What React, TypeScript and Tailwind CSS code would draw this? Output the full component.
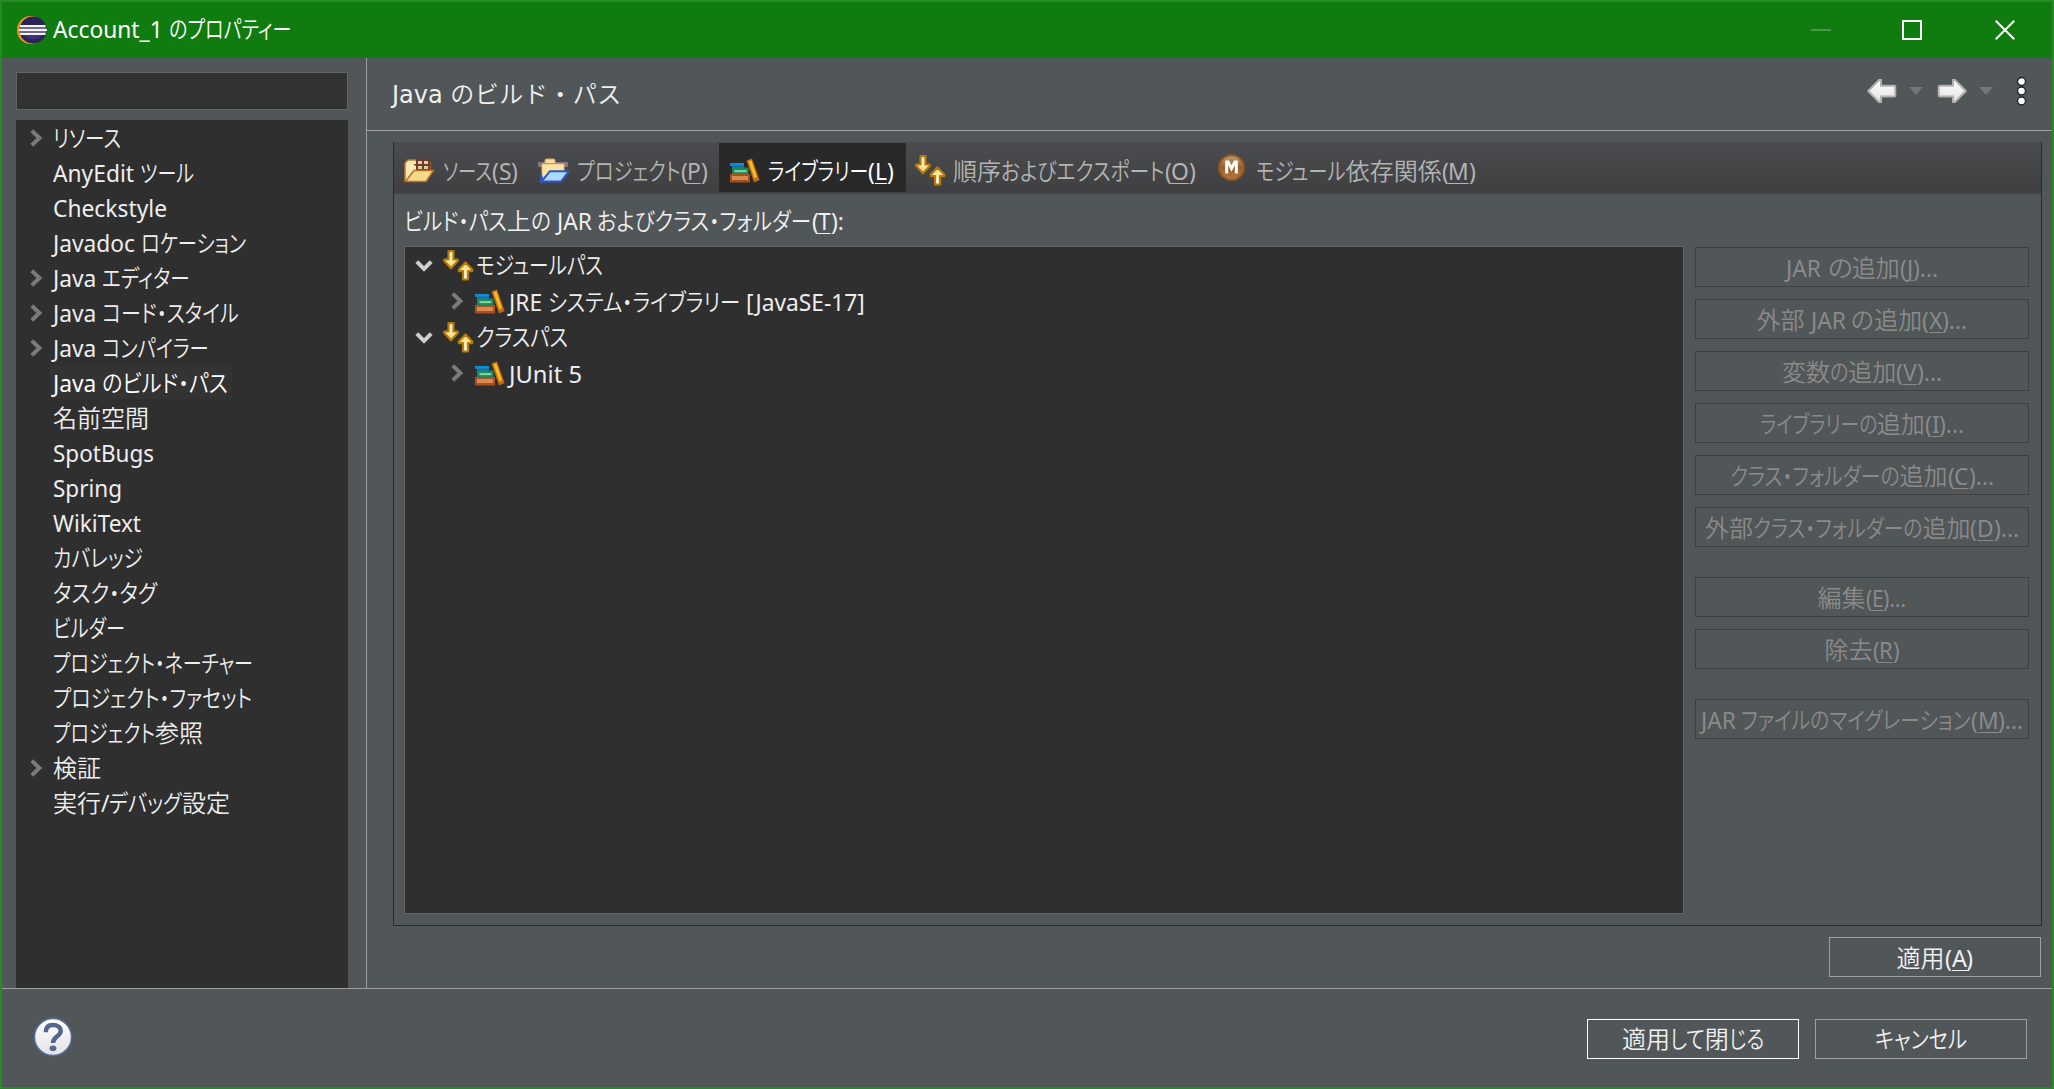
import { useLayoutEffect, useRef, type ReactNode } from 'react';

type Run = { kind: 'latin' | 'kana' | 'kanji'; text: string; underline: boolean };

function kindOf(ch: string): Run['kind'] {
  if (/[\u3040-\u30ff]/.test(ch)) return 'kana';
  if (/[\u3400-\u9fff]/.test(ch)) return 'kanji';
  return 'latin';
}

// Splits a label into script runs; a "&" marks the next character as the mnemonic.
function splitRuns(label: string): Run[] {
  const runs: Run[] = [];
  let underline = false;
  for (const ch of label) {
    if (ch === '&') {
      underline = true;
      continue;
    }
    const kind = kindOf(ch);
    const last = runs[runs.length - 1];
    if (last && last.kind === kind && !last.underline && !underline) last.text += ch;
    else runs.push({ kind, text: ch, underline });
    underline = false;
  }
  return runs;
}

const LATIN_SCALE = 0.99;

// UI label with condensed kana, fitted to a width in pixels.
function Label({ text, w, className = '' }: { text: string; w: number; className?: string }) {
  const ref = useRef<HTMLSpanElement>(null);
  useLayoutEffect(() => {
    const el = ref.current;
    if (!el) return;
    const spans = Array.from(el.children) as HTMLElement[];
    spans.forEach((s) => {
      s.style.width = '';
      s.style.transform = '';
    });
    const sizes = spans.map((s) => s.getBoundingClientRect().width);
    const sum = (k: string) => spans.reduce((a, s, i) => (s.dataset.kind === k ? a + sizes[i] : a), 0);
    const kana = sum('kana');
    const latin = sum('latin');
    const kanji = sum('kanji');
    const latinScale = kana > 0 || latin === 0 ? LATIN_SCALE : (w - kanji) / latin;
    const kanaScale = kana > 0 ? (w - kanji - latin * latinScale) / kana : 1;
    spans.forEach((s, i) => {
      const k = s.dataset.kind === 'kana' ? kanaScale : s.dataset.kind === 'latin' ? latinScale : 1;
      s.style.width = `${sizes[i] * k}px`;
      s.style.transform = `scaleX(${k})`;
    });
  }, [text, w]);
  return (
    <span
      ref={ref}
      className={`inline-block whitespace-pre pt-[3px] font-['Noto_Sans','Noto_Sans_CJK_JP',sans-serif] leading-[34px] ${className}`}
    >
      {splitRuns(text).map((r, i) => (
        <span
          key={i}
          data-kind={r.kind}
          className={`inline-block origin-left whitespace-pre ${
            r.kind === 'latin'
              ? 'text-[23px]'
              : r.kind === 'kana'
                ? "text-[24px] font-[350] [font-feature-settings:'palt']"
                : 'text-[24px] font-[350]'
          } ${r.underline ? 'underline decoration-1 underline-offset-[3px]' : ''}`}
        >
          {r.text}
        </span>
      ))}
    </span>
  );
}

function ChevronRight({ className = '' }: { className?: string }) {
  return (
    <svg width="13" height="18" viewBox="0 0 13 18" className={`shrink-0 ${className}`} fill="none">
      <path d="M1.8 1.8 L9.4 9 L1.8 16.2" stroke="#7b7b7b" strokeWidth="4" />
    </svg>
  );
}

function ChevronDown() {
  return (
    <svg width="18" height="12" viewBox="0 0 18 12" className="mt-[2px] shrink-0" fill="none">
      <path d="M1.8 1.6 L9 8.8 L16.2 1.6" stroke="#cfcfcf" strokeWidth="4" />
    </svg>
  );
}

function EclipseIcon() {
  return (
    <svg width="32" height="30" viewBox="0 0 32 30" className="shrink-0">
      <circle cx="16" cy="15" r="14" fill="#f7941e" />
      <circle cx="18" cy="15" r="13.6" fill="#2c2255" />
      <path d="M8 19h20a11 9 0 0 1-20 0z" fill="#40307c" />
      <path d="M4 13h27M4 17h27" stroke="#6f6a92" strokeWidth="2" />
      <path d="M5 11h25.500M4 15h28M5 19h25.500" stroke="#f2f4f4" strokeWidth="1.900" />
    </svg>
  );
}

function BooksIcon() {
  return (
    <svg width="30" height="25" viewBox="0 0 30 25" className="shrink-0">
      <path d="M0 5h14v5H2V8H0z" fill="#1d6cae" />
      <rect x="0" y="5" width="14" height="2.500" fill="#0b8fd8" />
      <rect x="2" y="9.500" width="16.500" height="7" fill="#188a5c" />
      <rect x="4.500" y="12" width="12" height="2.200" fill="#7fd09b" />
      <rect x="0" y="16" width="20" height="8.500" fill="#a5501e" />
      <rect x="2" y="18" width="16" height="4" fill="#d98a50" />
      <path d="M16.500 2.600 L22 .4 L29.600 22 L24 24.600z" fill="#c4691b" />
      <path d="M18.400 3.200 L21.400 2.200 L27 19 L24.400 20.400z" fill="#f5bd1f" />
    </svg>
  );
}

function ArrowsIcon() {
  const down = 'M5.500 1.200h5v8.300h4.200v1.600L8 18.200 1.300 11.100V9.500h4.200z';
  return (
    <svg width="31" height="31" viewBox="0 0 31 31" className="shrink-0">
      <defs>
        <linearGradient id="gold" x1="0" y1="0" x2="0" y2="1">
          <stop offset="0" stopColor="#fffbe6" />
          <stop offset="1" stopColor="#ffd870" />
        </linearGradient>
      </defs>
      <g stroke="#b57a0c" strokeWidth="2.200" strokeLinejoin="round" fill="url(#gold)">
        <path d={down} />
        <path d={down} transform="translate(30.500 30.700) rotate(180)" />
      </g>
    </svg>
  );
}

function SourceFolderIcon() {
  return (
    <svg width="31" height="25" viewBox="0 0 31 25" className="shrink-0">
      <path d="M1 23V5l3-3h8l2 3h12v8" fill="#fbe9b2" stroke="#c07a25" strokeWidth="1.500" />
      <rect x="12" y="1" width="14" height="11" fill="#6e3b2c" />
      <path d="M14 3h4v3h-4zM20 3h4v3h-4zM14 8h4v3h-4zM20 8h4v3h-4z" fill="#e3cf9e" />
      <path d="M10 6.800h18M16 1v-1M22 1v-1" stroke="#6e3b2c" strokeWidth="1.500" />
      <path d="M1.500 23.500 L10 12.500 H29.500 L22 23.500z" fill="#f8d98a" stroke="#b4722a" strokeWidth="1.500" />
    </svg>
  );
}

function ProjectFolderIcon() {
  return (
    <svg width="32" height="25" viewBox="0 0 32 25" className="shrink-0">
      <rect x="0" y="4" width="30" height="5" fill="#8a7480" />
      <path d="M7 5V2.500Q7 1 8.500 1h7Q17 1 17 2.500V5" fill="#f6dca4" stroke="#d9a95c" />
      <path d="M4 22V6h22v8" fill="#fbe3a6" stroke="#e3bb6f" />
      <path d="M3 15v8.500h4" fill="#4a6bd0" stroke="#3455bd" strokeWidth="2" />
      <path d="M3.500 23.500 L12 13.200 H31 L23 23.500z" fill="#a9dbff" stroke="#3455bd" strokeWidth="2" />
    </svg>
  );
}

function ModuleIcon() {
  return (
    <svg width="27" height="27" viewBox="0 0 27 27" className="shrink-0">
      <defs>
        <linearGradient id="bronze" x1="0" y1="0" x2="0" y2="1">
          <stop offset="0" stopColor="#c59a72" />
          <stop offset=".5" stopColor="#9a5f28" />
          <stop offset="1" stopColor="#b07a45" />
        </linearGradient>
      </defs>
      <circle cx="13.500" cy="13.500" r="12.300" fill="url(#bronze)" stroke="#94591f" strokeWidth="2" />
      <path d="M8.700 19.500V8h1.500l3.300 6.500L16.800 8h1.500v11.500" fill="none" stroke="#fff" strokeWidth="3" />
    </svg>
  );
}

function NavArrow({ flip = false }: { flip?: boolean }) {
  return (
    <svg width="30" height="24" viewBox="0 0 30 24" className={`shrink-0 ${flip ? '-scale-x-100' : ''}`}>
      <defs>
        <linearGradient id="silver" x1="0" y1="0" x2="0" y2="1">
          <stop offset="0" stopColor="#fff" />
          <stop offset="1" stopColor="#e2e2e2" />
        </linearGradient>
      </defs>
      <path
        d="M1.200 12 L12 1h2v5.800h13Q28.300 6.800 28.300 8v8.300q0 1.200-1.300 1.200H14V23h-2z"
        fill="url(#silver)"
        stroke="#b2b0ae"
        strokeWidth="2"
      />
    </svg>
  );
}

function DropTriangle() {
  return (
    <svg width="14" height="8" viewBox="0 0 14 8" className="shrink-0">
      <path d="M0 0h14L7 8z" fill="#747678" />
    </svg>
  );
}

const categories: { text: string; w: number; expandable?: boolean; selected?: boolean }[] = [
  { text: 'リソース', w: 68, expandable: true },
  { text: 'AnyEdit ツール', w: 141 },
  { text: 'Checkstyle', w: 114 },
  { text: 'Javadoc ロケーション', w: 193 },
  { text: 'Java エディター', w: 137, expandable: true },
  { text: 'Java コード・スタイル', w: 186, expandable: true },
  { text: 'Java コンパイラー', w: 156, expandable: true },
  { text: 'Java のビルド・パス', w: 175, selected: true },
  { text: '名前空間', w: 96 },
  { text: 'SpotBugs', w: 101 },
  { text: 'Spring', w: 69 },
  { text: 'WikiText', w: 88 },
  { text: 'カバレッジ', w: 90 },
  { text: 'タスク・タグ', w: 104 },
  { text: 'ビルダー', w: 72 },
  { text: 'プロジェクト・ネーチャー', w: 200 },
  { text: 'プロジェクト・ファセット', w: 199 },
  { text: 'プロジェクト参照', w: 150 },
  { text: '検証', w: 48, expandable: true },
  { text: '実行/デバッグ設定', w: 177 },
];

function Sidebar() {
  return (
    <aside className="flex w-[365px] flex-col border-r border-[#a0a0a0] pt-[14px] pr-[18px] pl-[14px]">
      <div className="h-[38px] shrink-0 border border-[#646464] bg-[#323232]" />
      <ul className="mt-[10px] flex-1 bg-[#2f2f2f]">
        {categories.map((c) => (
          <li key={c.text} className="flex h-[35px] items-center pl-[14px]">
            <span className="flex w-5 items-center">{c.expandable && <ChevronRight />}</span>
            <span
              className={`flex h-[33px] items-center pr-1 pl-[3px] ${
                c.selected ? 'bg-[#333333] text-white' : 'text-[#eeeeee]'
              }`}
            >
              <Label text={c.text} w={c.w} />
            </span>
          </li>
        ))}
      </ul>
    </aside>
  );
}

function PageHeader() {
  return (
    <header className="flex h-[73px] shrink-0 items-center border-b border-[#a0a0a0] pr-[25px] pl-[25px]">
      <h1 className="flex items-baseline text-[24px] leading-[34px] whitespace-pre text-[#f0f0f0]">
        <span className="font-['DejaVu_Sans',sans-serif]">Java </span>
        <span className="font-['Noto_Sans_CJK_JP',sans-serif] font-[350] tracking-[.5px]">のビルド・パス</span>
      </h1>
      <div className="mb-[6px] ml-auto flex items-center">
        <NavArrow />
        <span className="ml-[12px] flex">
          <DropTriangle />
        </span>
        <span className="ml-[14px] flex">
          <NavArrow flip />
        </span>
        <span className="ml-[12px] flex">
          <DropTriangle />
        </span>
        <svg width="11" height="30" viewBox="0 0 11 30" className="ml-[23px] shrink-0">
          {[5.5, 15, 25].map((cy) => (
            <circle key={cy} cx="5.500" cy={cy} r="4" fill="#fff" stroke="#242424" strokeWidth="1.400" />
          ))}
        </svg>
      </div>
    </header>
  );
}

function Tab({ icon, text, w, cls }: { icon: ReactNode; text: string; w: number; cls: string }) {
  return (
    <div className={`flex h-[49px] items-center pt-[6px] ${cls}`}>
      {icon}
      <Label text={text} w={w} />
    </div>
  );
}

function TabBar() {
  return (
    <div className="flex h-[52px] shrink-0 items-start border-b-2 border-[#434346] bg-linear-to-b from-[#4b4c4f] to-[#404042] pt-px pl-[10px] text-[#b4b4b4]">
      <Tab icon={<SourceFolderIcon />} text="ソース(&S)" w={75} cls="w-[134px] gap-[8px]" />
      <Tab icon={<ProjectFolderIcon />} text="プロジェクト(&P)" w={131} cls="w-[181px] gap-[7px]" />
      <Tab icon={<BooksIcon />} text="ライブラリー(&L)" w={126} cls="w-[187px] gap-[8px] bg-[#292929] pl-[11px] text-white" />
      <Tab icon={<ArrowsIcon />} text="順序およびエクスポート(&O)" w={243} cls="w-[302px] gap-[7px] pl-[9px]" />
      <Tab
        icon={
          <span className="mb-[6px]">
            <ModuleIcon />
          </span>
        }
        text="モジュール依存関係(&M)"
        w={220}
        cls="gap-[11px] pl-[10px]"
      />
    </div>
  );
}

function BuildPathTree() {
  const groups = [
    { text: 'モジュールパス', w: 127, child: 'JRE システム・ライブラリー [JavaSE-17]', cw: 356 },
    { text: 'クラスパス', w: 92, child: 'JUnit 5', cw: 73 },
  ];
  return (
    <div className="w-[1280px] border border-[#646464] bg-[#2f2f2f] text-[#eeeeee]">
      {groups.map((g) => (
        <div key={g.text}>
          <div className="flex h-9 items-center pl-[10px]">
            <ChevronDown />
            <span className="ml-[10px] flex">
              <ArrowsIcon />
            </span>
            <Label text={g.text} w={g.w} className="ml-[2px]" />
          </div>
          <div className="flex h-9 items-center pl-[46px]">
            <ChevronRight />
            <span className="ml-[11px] flex">
              <BooksIcon />
            </span>
            <Label text={g.child} w={g.cw} className="mt-[2px] ml-[4px]" />
          </div>
        </div>
      ))}
    </div>
  );
}

function Button({ text, w, cls }: { text: string; w: number; cls: string }) {
  return (
    <button className={`flex h-10 shrink-0 items-center justify-center border ${cls}`}>
      <Label text={text} w={w} />
    </button>
  );
}

const actionGroups = [
  [
    { text: 'JAR の追加(&J)...', w: 152 },
    { text: '外部 JAR の追加(&X)...', w: 211 },
    { text: '変数の追加(&V)...', w: 160 },
    { text: 'ライブラリーの追加(&I)...', w: 205 },
    { text: 'クラス・フォルダーの追加(&C)...', w: 264 },
    { text: '外部クラス・フォルダーの追加(&D)...', w: 314 },
  ],
  [
    { text: '編集(&E)...', w: 89 },
    { text: '除去(&R)', w: 75 },
  ],
  [{ text: 'JAR ファイルのマイグレーション(&M)...', w: 323 }],
];

function Actions() {
  return (
    <div className="flex w-[334px] flex-col gap-[30px]">
      {actionGroups.map((group, i) => (
        <div key={i} className="flex flex-col gap-3">
          {group.map((b) => (
            <Button key={b.text} text={b.text} w={b.w} cls="w-full border-[#3e3f40] pt-px text-[#8a8a8a]" />
          ))}
        </div>
      ))}
    </div>
  );
}

function TitleBar() {
  return (
    <div className="flex h-14 shrink-0 items-center bg-[#107c10] pl-[13px] text-white">
      <EclipseIcon />
      <Label text="Account_1 のプロパティー" w={238} className="mb-[2px] ml-[6px]" />
      <div className="ml-auto flex items-center pr-[37px]">
        <span className="h-[2px] w-5 bg-[#459a45]" />
        <span className="ml-[71px] size-5 border-2 border-white" />
        <svg width="20" height="20" viewBox="0 0 20 20" className="ml-[73px]">
          <path d="M.7 .7 L19.300 19.300 M19.300 .7 L.7 19.300" stroke="#fff" strokeWidth="2" />
        </svg>
      </div>
    </div>
  );
}

function Footer() {
  return (
    <footer className="flex h-[99px] shrink-0 items-center gap-4 border-t border-[#a0a0a0] pt-[2px] pr-[25px] pl-[31px] text-[#f0f0f0]">
      <svg width="40" height="40" viewBox="0 0 40 40" className="mr-auto mb-[4px]">
        <defs>
          <linearGradient id="help" x1="0" y1="0" x2="0" y2="1">
            <stop offset="0" stopColor="#fff" />
            <stop offset="1" stopColor="#e2e2e2" />
          </linearGradient>
        </defs>
        <circle cx="20" cy="20" r="18.600" fill="url(#help)" stroke="#526a97" strokeWidth="1.600" />
        <path
          d="M12.800 15.200 C12.800 10 16 8 20 8 S27.700 10.200 27.700 14 C27.700 19.500 20 19.300 20 26"
          fill="none"
          stroke="#526690"
          strokeWidth="4.400"
        />
        <ellipse cx="20" cy="31.200" rx="3.400" ry="2.800" fill="#526690" />
      </svg>
      <Button text="適用して閉じる" w={142} cls="w-[212px] border-white" />
      <Button text="キャンセル" w={92} cls="w-[212px] border-[#a0a0a0]" />
    </footer>
  );
}

export default function App() {
  return (
    <div className="flex h-[1089px] w-[2054px] flex-col overflow-hidden border-2 border-[#268a26] bg-[#515658]">
      <TitleBar />
      <div className="flex min-h-0 flex-1">
        <Sidebar />
        <main className="flex min-w-0 flex-1 flex-col">
          <PageHeader />
          <div className="mt-[11px] mr-[10px] ml-[26px] flex h-[784px] shrink-0 flex-col border-x border-b border-[#2a2a2d]">
            <TabBar />
            <div className="flex flex-1 flex-col px-[10px] pt-[7px] pb-[11px]">
              <div className="h-[45px] shrink-0 text-[#f0f0f0]">
                <Label text="ビルド・パス上の JAR およびクラス・フォルダー(&T):" w={440} />
              </div>
              <div className="flex flex-1 gap-[11px]">
                <BuildPathTree />
                <div className="pt-px">
                  <Actions />
                </div>
              </div>
            </div>
          </div>
          <div className="mt-[11px] mr-[11px] flex justify-end text-[#f0f0f0]">
            <Button text="適用(&A)" w={77} cls="w-[212px] border-[#a0a0a0] pt-px" />
          </div>
        </main>
      </div>
      <Footer />
    </div>
  );
}
